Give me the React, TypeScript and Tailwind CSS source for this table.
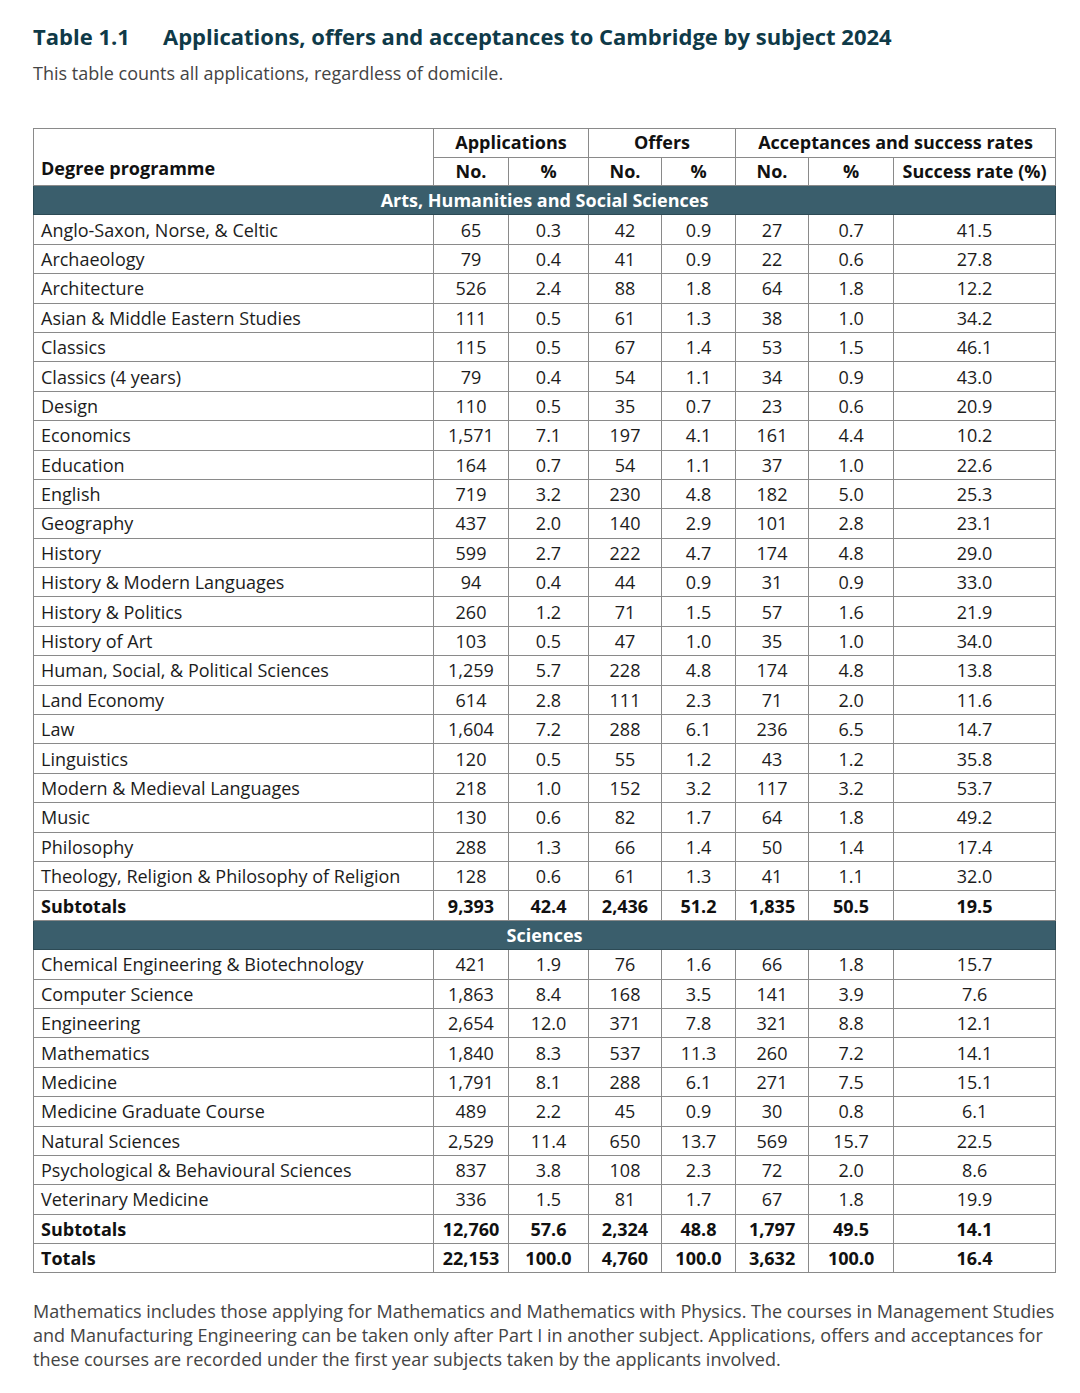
import React from "react"

type Row = [string, string, string, string, string, string, string, string]

const arts: Row[] = [
  ["Anglo-Saxon, Norse, & Celtic", "65", "0.3", "42", "0.9", "27", "0.7", "41.5"],
  ["Archaeology", "79", "0.4", "41", "0.9", "22", "0.6", "27.8"],
  ["Architecture", "526", "2.4", "88", "1.8", "64", "1.8", "12.2"],
  ["Asian & Middle Eastern Studies", "111", "0.5", "61", "1.3", "38", "1.0", "34.2"],
  ["Classics", "115", "0.5", "67", "1.4", "53", "1.5", "46.1"],
  ["Classics (4 years)", "79", "0.4", "54", "1.1", "34", "0.9", "43.0"],
  ["Design", "110", "0.5", "35", "0.7", "23", "0.6", "20.9"],
  ["Economics", "1,571", "7.1", "197", "4.1", "161", "4.4", "10.2"],
  ["Education", "164", "0.7", "54", "1.1", "37", "1.0", "22.6"],
  ["English", "719", "3.2", "230", "4.8", "182", "5.0", "25.3"],
  ["Geography", "437", "2.0", "140", "2.9", "101", "2.8", "23.1"],
  ["History", "599", "2.7", "222", "4.7", "174", "4.8", "29.0"],
  ["History & Modern Languages", "94", "0.4", "44", "0.9", "31", "0.9", "33.0"],
  ["History & Politics", "260", "1.2", "71", "1.5", "57", "1.6", "21.9"],
  ["History of Art", "103", "0.5", "47", "1.0", "35", "1.0", "34.0"],
  ["Human, Social, & Political Sciences", "1,259", "5.7", "228", "4.8", "174", "4.8", "13.8"],
  ["Land Economy", "614", "2.8", "111", "2.3", "71", "2.0", "11.6"],
  ["Law", "1,604", "7.2", "288", "6.1", "236", "6.5", "14.7"],
  ["Linguistics", "120", "0.5", "55", "1.2", "43", "1.2", "35.8"],
  ["Modern & Medieval Languages", "218", "1.0", "152", "3.2", "117", "3.2", "53.7"],
  ["Music", "130", "0.6", "82", "1.7", "64", "1.8", "49.2"],
  ["Philosophy", "288", "1.3", "66", "1.4", "50", "1.4", "17.4"],
  ["Theology, Religion & Philosophy of Religion", "128", "0.6", "61", "1.3", "41", "1.1", "32.0"],
]

const sciences: Row[] = [
  ["Chemical Engineering & Biotechnology", "421", "1.9", "76", "1.6", "66", "1.8", "15.7"],
  ["Computer Science", "1,863", "8.4", "168", "3.5", "141", "3.9", "7.6"],
  ["Engineering", "2,654", "12.0", "371", "7.8", "321", "8.8", "12.1"],
  ["Mathematics", "1,840", "8.3", "537", "11.3", "260", "7.2", "14.1"],
  ["Medicine", "1,791", "8.1", "288", "6.1", "271", "7.5", "15.1"],
  ["Medicine Graduate Course", "489", "2.2", "45", "0.9", "30", "0.8", "6.1"],
  ["Natural Sciences", "2,529", "11.4", "650", "13.7", "569", "15.7", "22.5"],
  ["Psychological & Behavioural Sciences", "837", "3.8", "108", "2.3", "72", "2.0", "8.6"],
  ["Veterinary Medicine", "336", "1.5", "81", "1.7", "67", "1.8", "19.9"],
]

const artsSub: Row = ["Subtotals", "9,393", "42.4", "2,436", "51.2", "1,835", "50.5", "19.5"]
const sciSub: Row = ["Subtotals", "12,760", "57.6", "2,324", "48.8", "1,797", "49.5", "14.1"]
const totals: Row = ["Totals", "22,153", "100.0", "4,760", "100.0", "3,632", "100.0", "16.4"]

const cell = "border border-[#8a8a8a] px-0 py-0"

function DataRow({ row, bold }: { row: Row; bold?: boolean }) {
  return (
    <tr className={`h-[29.4px] ${bold ? "font-bold text-[#111]" : ""}`}>
      <td className={`${cell} pl-[7px] text-left`}>{row[0]}</td>
      {row.slice(1).map((v, i) => (
        <td key={i} className={`${cell} text-center`}>
          {v}
        </td>
      ))}
    </tr>
  )
}

function Band({ label }: { label: string }) {
  return (
    <tr className="h-[29.4px]">
      <td
        colSpan={8}
        className="border border-[#2c4a55] bg-[#3a5e6c] text-center font-bold text-white"
      >
        {label}
      </td>
    </tr>
  )
}

export default function App() {
  return (
    <div className="min-h-[1393px] w-[1080px] bg-white font-['Open_Sans',sans-serif] text-[#1c1c1c]">
      <div className="px-[33px] pt-[21px]">
        {/* Title */}
        <h1 className="flex text-[22px] font-bold leading-[30px] text-[#0f3a48]">
          <span className="w-[130px]">Table 1.1</span>
          <span>Applications, offers and acceptances to Cambridge by subject 2024</span>
        </h1>
        <p className="mt-[10px] text-[18px] leading-[24px] text-[#444]">
          This table counts all applications, regardless of domicile.
        </p>

        {/* Table */}
        <table className="mt-[43px] w-[1022px] table-fixed border-collapse text-[18px] leading-[22px]">
          <colgroup>
            <col className="w-[400px]" />
            <col className="w-[75px]" />
            <col className="w-[80px]" />
            <col className="w-[73px]" />
            <col className="w-[74px]" />
            <col className="w-[73px]" />
            <col className="w-[85px]" />
            <col className="w-[162px]" />
          </colgroup>
          <thead className="font-bold text-[#111]">
            <tr className="h-[28.5px]">
              <th rowSpan={2} className={`${cell} pl-[7px] pt-[22px] text-left`}>
                Degree programme
              </th>
              <th colSpan={2} className={`${cell} pb-[2px] text-center`}>
                Applications
              </th>
              <th colSpan={2} className={`${cell} pb-[2px] text-center`}>
                Offers
              </th>
              <th colSpan={3} className={`${cell} pb-[2px] text-center`}>
                Acceptances and success rates
              </th>
            </tr>
            <tr className="h-[28.5px]">
              <th className={`${cell} text-center`}>No.</th>
              <th className={`${cell} text-center`}>%</th>
              <th className={`${cell} text-center`}>No.</th>
              <th className={`${cell} text-center`}>%</th>
              <th className={`${cell} text-center`}>No.</th>
              <th className={`${cell} text-center`}>%</th>
              <th className={`${cell} text-center`}>Success rate (%)</th>
            </tr>
          </thead>
          <tbody>
            <Band label="Arts, Humanities and Social Sciences" />
            {arts.map((r) => (
              <DataRow key={r[0]} row={r} />
            ))}
            <DataRow row={artsSub} bold />
            <Band label="Sciences" />
            {sciences.map((r) => (
              <DataRow key={r[0]} row={r} />
            ))}
            <DataRow row={sciSub} bold />
            <DataRow row={totals} bold />
          </tbody>
        </table>

        {/* Footnote */}
        <p className="mt-[26px] w-[1025px] text-[18px] leading-[24px] text-[#444]">
          Mathematics includes those applying for Mathematics and Mathematics with Physics. The
          courses in Management Studies and Manufacturing Engineering can be taken only after Part I
          in another subject. Applications, offers and acceptances for these courses are recorded
          under the first year subjects taken by the applicants involved.
        </p>
      </div>
    </div>
  )
}
